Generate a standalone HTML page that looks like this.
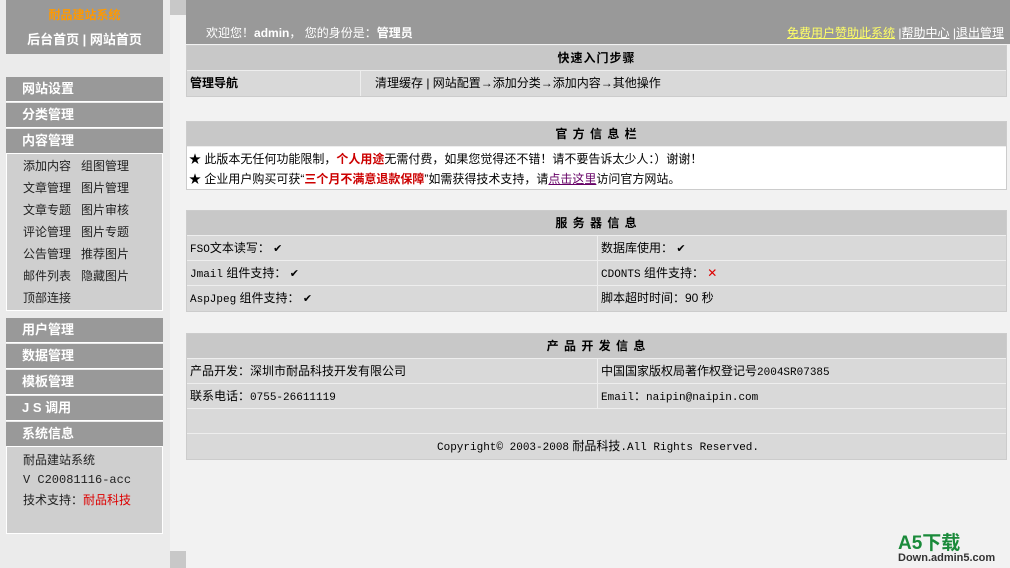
<!DOCTYPE html>
<html><head><meta charset="utf-8"><style>
*{margin:0;padding:0;box-sizing:border-box}
body{width:1010px;height:568px;overflow:hidden;background:#f2f2f2;font:12px "Liberation Sans","Noto Sans CJK SC",sans-serif;color:#000;position:relative}
.a{position:absolute}
.side{left:0;top:0;width:170px;height:568px;background:#ebebeb}
.mh{left:6px;width:157px;height:25px;background:#999;color:#fff;font-weight:bold;font-size:13px;line-height:23px;padding-left:16px;border-bottom:1px solid #fff}
.sub{left:6px;width:157px;background:#cfcfcf;border:1px solid #fff;border-top:0}
.sub div{height:22px;line-height:22px;padding-left:16px;font-size:12px;color:#222}
.tb{left:186px;width:821px;border:1px solid #ccc;background:#d9d9d9}
.hd{height:25px;background:#c8c8c8;text-align:center;font-weight:bold;line-height:25px;border-bottom:1px solid #eee;letter-spacing:1px}
.r{height:25px;line-height:24px;border-bottom:1px solid #eee;position:relative;padding-left:3px}
.r .c2{position:absolute;left:410px;top:0;bottom:0;border-left:1px solid #eee;padding-left:3px}
.mono{font-family:"Liberation Mono","Noto Sans CJK SC",monospace;font-size:11px}
.ck{font-size:11px}
</style></head><body>
<div class="a side"></div>
<div class="a" style="left:170px;top:0;width:16px;height:15px;background:#c8c8c8"></div>
<div class="a" style="left:170px;top:551px;width:16px;height:17px;background:#c8c8c8"></div>
<div class="a" style="left:6px;top:0;width:157px;height:54px;background:#999;text-align:center;color:#fff;font-weight:bold">
<div style="color:#f90;font-size:12px;margin-top:6px">耐品建站系统</div>
<div style="font-size:13px;margin-top:6px">后台首页 | 网站首页</div></div>
<div class="a mh" style="top:77px">网站设置</div>
<div class="a mh" style="top:103px">分类管理</div>
<div class="a mh" style="top:129px">内容管理</div>
<div class="a sub" style="top:154px;height:157px;padding-top:1px">
<div>添加内容&nbsp;&nbsp;&nbsp;组图管理</div><div>文章管理&nbsp;&nbsp;&nbsp;图片管理</div><div>文章专题&nbsp;&nbsp;&nbsp;图片审核</div><div>评论管理&nbsp;&nbsp;&nbsp;图片专题</div><div>公告管理&nbsp;&nbsp;&nbsp;推荐图片</div><div>邮件列表&nbsp;&nbsp;&nbsp;隐藏图片</div><div>顶部连接</div></div>
<div class="a mh" style="top:318px">用户管理</div>
<div class="a mh" style="top:344px">数据管理</div>
<div class="a mh" style="top:370px">模板管理</div>
<div class="a mh" style="top:396px">J S 调用</div>
<div class="a mh" style="top:422px">系统信息</div>
<div class="a sub" style="top:447px;height:87px;padding-top:3px">
<div style="height:20px;line-height:20px">耐品建站系统</div>
<div class="mono" style="height:20px;line-height:20px">V C20081116-acc</div>
<div style="height:20px;line-height:20px">技术支持：<span style="color:#d00">耐品科技</span></div></div>

<div class="a" style="left:186px;top:0;width:824px;height:44px;background:#999;color:#fff">
<div class="a" style="left:20px;top:24px">欢迎您！<b>admin</b>， 您的身份是：<b>管理员</b></div>
<div class="a" style="right:6px;top:24px"><u style="color:#ff6">免费用户赞助此系统</u> |<u>帮助中心</u> |<u>退出管理</u></div></div>

<div class="a tb" style="top:45px">
<div class="hd">快速入门步骤</div>
<div class="r" style="border:0"><b>管理导航</b><span class="a" style="left:173px;top:0;bottom:0;border-left:1px solid #eee;padding-left:14px">清理缓存 | 网站配置→添加分类→添加内容→其他操作</span></div></div>

<div class="a tb" style="top:121px;background:#fff">
<div class="hd">官 方 信 息 栏</div>
<div style="padding:2px 0 0 2px;line-height:20px">★ 此版本无任何功能限制，<b style="color:#c00">个人用途</b>无需付费，如果您觉得还不错！请不要告诉太少人：）谢谢！<br>★ 企业用户购买可获“<b style="color:#c00">三个月不满意退款保障</b>”如需获得技术支持，请<u style="color:#606">点击这里</u>访问官方网站。</div></div>

<div class="a tb" style="top:210px">
<div class="hd">服 务 器 信 息</div>
<div class="r"><span class="mono">FSO</span>文本读写： <span class="ck">✔</span><span class="c2">数据库使用： <span class="ck">✔</span></span></div>
<div class="r"><span class="mono">Jmail</span> 组件支持： <span class="ck">✔</span><span class="c2"><span class="mono">CDONTS</span> 组件支持： <span style="color:#d00">✕</span></span></div>
<div class="r" style="border:0"><span class="mono">AspJpeg</span> 组件支持： <span class="ck">✔</span><span class="c2">脚本超时时间：90 秒</span></div></div>

<div class="a tb" style="top:333px">
<div class="hd">产 品 开 发 信 息</div>
<div class="r">产品开发：深圳市耐品科技开发有限公司<span class="c2">中国国家版权局著作权登记号<span class="mono">2004SR07385</span></span></div>
<div class="r">联系电话：<span class="mono">0755-26611119</span><span class="c2"><span class="mono">Email</span>：<span class="mono">naipin@naipin.com</span></span></div>
<div class="r"></div>
<div class="r" style="border:0;text-align:center"><span class="mono">Copyright© 2003-2008</span> 耐品科技<span class="mono">.All Rights Reserved.</span></div></div>

<div class="a" style="left:898px;top:534px;color:#1a8a3a;font-weight:bold;font-size:19px;line-height:20px">A5下载</div>
<div class="a" style="left:898px;top:552px;font-size:11px;font-weight:bold;color:#333">Down.admin5.com</div>
</body></html>
